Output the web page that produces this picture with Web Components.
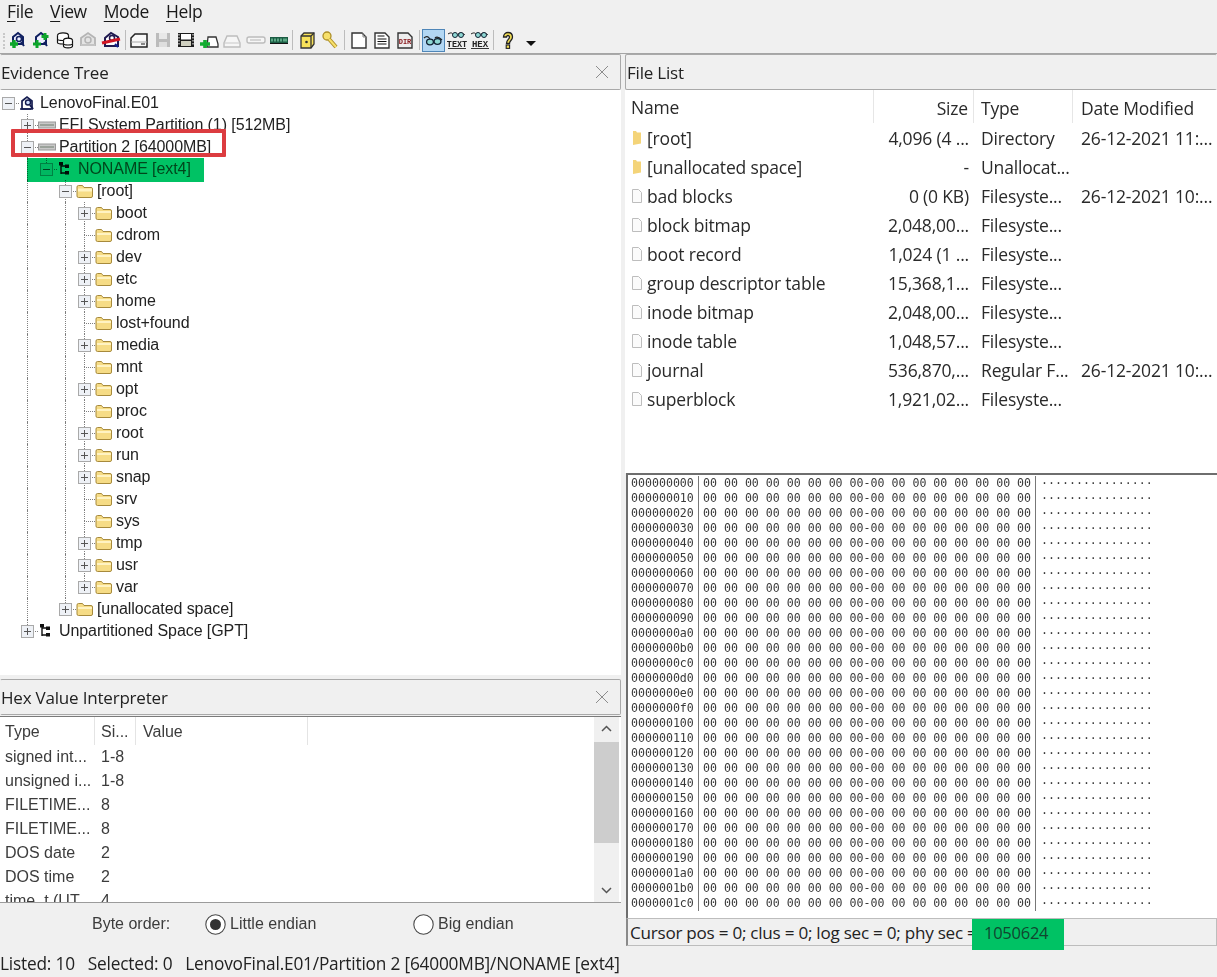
<!DOCTYPE html>
<html>
<head>
<meta charset="utf-8">
<title>Evidence viewer</title>
<style>
    html, body { margin: 0; height: 100%; background: #f0f0f0; overflow: hidden; }
</style>
</head>
<body>
<app-window>
    <menu-bar slot="top"></menu-bar>
    <tool-bar slot="top"></tool-bar>
    <div slot="left">
        <dock-panel title="Evidence Tree" closable style="height:621px">
            <tree-view>
                <tree-node depth="0" guides="" toggle="minus" icon="evidence" first>LenovoFinal.E01</tree-node>
                <tree-node depth="1" guides="0" toggle="plus" icon="disk">EFI System Partition (1) [512MB]</tree-node>
                <tree-node depth="1" guides="0" toggle="minus" icon="disk">Partition 2 [64000MB]</tree-node>
                <tree-node depth="2" guides="01" toggle="minus" icon="volume" last style="color:#175c45">NONAME [ext4]</tree-node>
                <tree-node depth="3" guides="010" toggle="minus" icon="open">[root]</tree-node>
                <tree-node depth="4" guides="0101" toggle="plus" icon="folder">boot</tree-node>
                <tree-node depth="4" guides="0101" icon="folder">cdrom</tree-node>
                <tree-node depth="4" guides="0101" toggle="plus" icon="folder">dev</tree-node>
                <tree-node depth="4" guides="0101" toggle="plus" icon="folder">etc</tree-node>
                <tree-node depth="4" guides="0101" toggle="plus" icon="folder">home</tree-node>
                <tree-node depth="4" guides="0101" icon="folder">lost+found</tree-node>
                <tree-node depth="4" guides="0101" toggle="plus" icon="folder">media</tree-node>
                <tree-node depth="4" guides="0101" icon="folder">mnt</tree-node>
                <tree-node depth="4" guides="0101" toggle="plus" icon="folder">opt</tree-node>
                <tree-node depth="4" guides="0101" icon="folder">proc</tree-node>
                <tree-node depth="4" guides="0101" toggle="plus" icon="folder">root</tree-node>
                <tree-node depth="4" guides="0101" toggle="plus" icon="folder">run</tree-node>
                <tree-node depth="4" guides="0101" toggle="plus" icon="folder">snap</tree-node>
                <tree-node depth="4" guides="0101" icon="folder">srv</tree-node>
                <tree-node depth="4" guides="0101" icon="folder">sys</tree-node>
                <tree-node depth="4" guides="0101" toggle="plus" icon="folder">tmp</tree-node>
                <tree-node depth="4" guides="0101" toggle="plus" icon="folder">usr</tree-node>
                <tree-node depth="4" guides="0101" toggle="plus" last icon="folder">var</tree-node>
                <tree-node depth="3" guides="010" toggle="plus" last icon="folder">[unallocated space]</tree-node>
                <tree-node depth="1" guides="0" toggle="plus" last icon="volume">Unpartitioned Space [GPT]</tree-node>
            </tree-view>
        </dock-panel>
        <dock-panel title="Hex Value Interpreter" closable style="height:266px;margin-top:4px">
            <interp-table></interp-table>
            <byte-order></byte-order>
        </dock-panel>
    </div>
    <div slot="right">
        <dock-panel title="File List" style="height:419px">
            <file-list></file-list>
        </dock-panel>
        <hex-view></hex-view>
    </div>
    <status-bar slot="bottom">Listed: 10&nbsp;&nbsp;&nbsp;Selected: 0&nbsp;&nbsp;&nbsp;LenovoFinal.E01/Partition 2 [64000MB]/NONAME [ext4]</status-bar>
</app-window>

<script>
const UI_FONT = '"Open Sans", "Noto Sans", sans-serif';
const TREE_FONT = '"Liberation Sans", Arial, sans-serif';

const TOOL_ICONS = {
    addA: `<path d="M5 13V7l5-4 5 4v7H5z" fill="#eef" stroke="#102060" stroke-width="2"/><circle cx="11" cy="9" r="2.500" fill="none" stroke="#102060" stroke-width="1.500"/><path d="M13 12l3 4" stroke="#102060" stroke-width="2"/><path d="M6 10v8M2 14h8" stroke="#0da52a" stroke-width="3.400"/>`,
    addB: `<path d="M5 13V7l5-4 5 4v7H5z" fill="#eef" stroke="#102060" stroke-width="2"/><path d="M13 12l3 4" stroke="#102060" stroke-width="2"/><path d="M6 10v8M2 14h8M14 3v7M10.500 6.500h7" stroke="#0da52a" stroke-width="3"/>`,
    stack: `<g fill="#fff" stroke="#111" stroke-width="1.200"><ellipse cx="8" cy="5.500" rx="5.500" ry="2.600"/><path d="M2.500 5.500v7c0 2 11 2 11 0v-7"/><path d="M2.500 9c0 2 11 2 11 0"/><ellipse cx="13" cy="10.500" rx="4.500" ry="2.300"/><path d="M8.500 10.500v5.500c0 2.500 9 2.500 9 0v-5.500"/><path d="M8.500 13.500c0 2 9 2 9 0"/></g>`,
    grayEv: `<path d="M3 15V8l7-5 7 5v7H3z" fill="#e4e4e4" stroke="#b4b4b4" stroke-width="1.800"/><circle cx="10" cy="10" r="3" fill="none" stroke="#b4b4b4" stroke-width="1.500"/><path d="M3 15h14" stroke="#c4c4c4" stroke-width="2"/>`,
    removeEv: `<path d="M4 16V8l6-5 7 4v9H4z" fill="#fff" stroke="#201a50" stroke-width="2"/><circle cx="11" cy="8" r="2.500" fill="none" stroke="#201a50" stroke-width="1.500"/><path d="M1 13L19 9" stroke="#d01522" stroke-width="3"/><path d="M14 14l3 3" stroke="#102090" stroke-width="2"/>`,
    image: `<path d="M6 4h12v13H2V8z" fill="#f8f8f8" stroke="#222" stroke-width="1.500"/><path d="M2 12h16" stroke="#aaa"/><rect x="12" y="13" width="4" height="2" fill="#888"/>`,
    floppyGray: `<path d="M3 3h14v14H3z" fill="#bcbcbc"/><rect x="6" y="3" width="8" height="6" fill="#e8e8e8"/><rect x="6" y="12" width="8" height="5" fill="#dedede"/>`,
    film: `<rect x="2" y="3" width="16" height="14" fill="#1e1e1e"/><rect x="5" y="4" width="10" height="5.500" fill="#fff"/><rect x="5" y="11" width="10" height="5" fill="#d0d0c0"/><path d="M3 4v12M17 4v12" stroke="#fff" stroke-dasharray="1.500 1.500"/>`,
    cardAdd: `<path d="M9 7h8l2 7v3H8z" fill="#fff" stroke="#333" stroke-width="1.300"/><path d="M6 10v8M1 14h10" stroke="#12ac30" stroke-width="3.600"/>`,
    cardGray: `<path d="M5 6h10l3 7v4H2v-4z" fill="#f6f6f6" stroke="#bdbdbd" stroke-width="1.400"/><path d="M2 13h16" stroke="#c8c8c8"/>`,
    chipGray: `<path d="M3 7h14q2 0 2 2v2q0 2-2 2H3q-2 0-2-2V9q0-2 2-2z" fill="#f6f6f6" stroke="#bcbcbc" stroke-width="1.400"/><path d="M4 10h11" stroke="#c8c8c8" stroke-width="1.400"/>`,
    ram: `<rect x="1" y="7" width="18" height="6" fill="#1c5c44"/><path d="M3 8.500v3M6 8.500v3M9 8.500v3M12 8.500v3M15 8.500v3M17 8.500v3" stroke="#76c8a0" stroke-width="1.400"/><path d="M1 13.500h18" stroke="#111"/>`,
    box: `<path d="M4 6l3-3h10v11l-3 4H4z" fill="#f8e25a" stroke="#333" stroke-width="1.300"/><path d="M4 6h10v12M14 6l3-3" fill="none" stroke="#333" stroke-width="1.300"/><circle cx="9.500" cy="12" r="1.300" fill="#333"/>`,
    key: `<circle cx="7" cy="6" r="4" fill="#f7e06b" stroke="#ad8f28" stroke-width="1.300"/><path d="M9 9l7 8" stroke="#ad8f28" stroke-width="4"/><path d="M9 9l7 8" stroke="#f7e06b" stroke-width="2"/>`,
    page: `<path d="M3 3h10l4 4v11H3z" fill="#fff" stroke="#333" stroke-width="1.400"/><path d="M14 3v4h3" fill="none" stroke="#888"/>`,
    doc: `<path d="M3 3h10l4 4v11H3z" fill="#fff" stroke="#333" stroke-width="1.400"/><path d="M5.500 6h7M5.500 9h9M5.500 11.500h9M5.500 14h9" stroke="#111" stroke-width="1.200"/>`,
    dir: `<path d="M3 3h10l4 4v11H3z" fill="#eee" stroke="#333" stroke-width="1.400"/><text x="10" y="13.500" font-family="Liberation Mono, monospace" font-size="7" font-weight="700" text-anchor="middle" fill="#8a1c20">DIR</text>`,
    glasses: `<path d="M1 8c2-2 4-2 6 1M12 8c2-2 4-1 7 2" fill="none" stroke="#222" stroke-width="1.200"/><ellipse cx="7" cy="12" rx="3.400" ry="2.800" fill="#8fd8d4" stroke="#123" stroke-width="1.300"/><ellipse cx="14.500" cy="11.500" rx="3.400" ry="2.800" fill="#8fd8d4" stroke="#123" stroke-width="1.300"/>`,
    text: `<path d="M1 4c3-2 5-1 5 1M11 4c2-2 5-1 7 1" fill="none" stroke="#222"/><circle cx="8" cy="5" r="2.500" fill="#8fd8d4" stroke="#123"/><circle cx="14" cy="5" r="2.500" fill="#8fd8d4" stroke="#123"/><text x="10" y="16.500" font-family="Liberation Mono, monospace" font-size="8.500" font-weight="700" text-anchor="middle" fill="#222">TEXT</text><path d="M1 18.500h18" stroke="#333"/>`,
    hex: `<path d="M1 4c3-2 5-1 5 1M11 4c2-2 5-1 7 1" fill="none" stroke="#222"/><circle cx="8" cy="5" r="2.500" fill="#8fd8d4" stroke="#123"/><circle cx="14" cy="5" r="2.500" fill="#8fd8d4" stroke="#123"/><text x="10" y="16.500" font-family="Liberation Mono, monospace" font-size="9" font-weight="700" text-anchor="middle" fill="#222">HEX</text><path d="M1 18.500h18" stroke="#333"/>`,
    help: `<path d="M5.500 7c0-6 9-6 9 0 0 3.500-3 3.500-3 6.500h-3c0-4 3-4 3-6.500 0-2-3-2-3 0z" fill="#f1dd55" stroke="#222" stroke-width="1.300"/><rect x="8.200" y="15" width="3.400" height="3.400" fill="#f1dd55" stroke="#222" stroke-width="1.100"/>`,
    more: `<path d="M5 11h10l-5 5z" fill="#111"/>`
};

const TREE_ICONS = {
    evidence: `<path d="M3 14V6l5-4 5 4v8z" fill="#fff" stroke="#141c50" stroke-width="1.700"/><circle cx="9" cy="7.500" r="2.500" fill="#d0e0ff" stroke="#141c50" stroke-width="1.400"/><path d="M11 10l3 4" stroke="#141c50" stroke-width="2"/><path d="M1 14h11" stroke="#141c50" stroke-width="1.500"/>`,
    disk: `<rect x="0.500" y="5" width="17" height="6" fill="#c8c8c8" stroke="#9a9a9a"/><path d="M3 7v2M5 7v2M7 7v2M9 7v2M11 7v2M13 7v2M15 7v2" stroke="#6e7c6e"/>`,
    volume: `<path d="M4 3v10M4 5h5M4 12h5" stroke="#111" stroke-width="1.400" fill="none"/><rect x="2" y="1" width="4" height="3.500" fill="#111"/><rect x="8" y="3.500" width="4" height="3.500" fill="#111"/><rect x="8" y="10" width="4" height="3.500" fill="#111"/>`,
    folder: `<path d="M1 4q0-1.500 1.500-1.500h4L8 4.500h7q1.500 0 1.500 1.500v7q0 1.500-1.500 1.500H2.500Q1 14.500 1 13z" fill="#f6dc86" stroke="#a78a3c"/><path d="M2 7h14" stroke="#fff3c2" stroke-width="2"/>`,
    open: `<path d="M1 4q0-1.500 1.500-1.500h4L8 4.500h7q1.500 0 1.500 1.500v7q0 1.500-1.500 1.500H2.500Q1 14.500 1 13z" fill="#f6dc86" stroke="#a78a3c"/><path d="M2 7h14" stroke="#fff3c2" stroke-width="3"/>`
};

class MenuBar extends HTMLElement {
    connectedCallback() {
        this.attachShadow({ mode: 'open' }).innerHTML = `
            <style>
                :host { display: flex; height: 28px; padding-left: 7px; gap: 17px; align-items: flex-start;
                    font: 17.500px/23px ${UI_FONT}; color: #1a1a1a; }
                u { text-underline-offset: 3px; text-decoration-thickness: 1px; }
                span { letter-spacing: -0.400px; }
            </style>
            <span><u>F</u>ile</span><span><u>V</u>iew</span><span><u>M</u>ode</span><span><u>H</u>elp</span>`;
    }
}

class ToolBar extends HTMLElement {
    connectedCallback() {
        const items = ['addA', 'addB', 'stack', 'grayEv', 'removeEv', '|', 'image', 'floppyGray', 'film', 'cardAdd', 'cardGray', 'chipGray', 'ram', '|', 'box', 'key', '|', 'page', 'doc', 'dir', '|', 'glasses*', 'text', 'hex', '|', 'help', 'more'];
        const html = items.map(n => {
            if (n === '|') return '<i class="sep"></i>';
            const on = n.endsWith('*');
            const name = on ? n.slice(0, -1) : n;
            return `<b class="${on ? 'on' : ''}"><svg width="20" height="20" viewBox="0 0 20 20">${TOOL_ICONS[name]}</svg></b>`;
        }).join('');
        this.attachShadow({ mode: 'open' }).innerHTML = `
            <style>
                :host { display: flex; height: 26px; box-sizing: border-box; padding: 1px 0 2px 6.400px; align-items: center;
                    border-bottom: 1px solid #a5a5a5; }
                b { width: 23.250px; height: 23px; display: flex; align-items: center; justify-content: center; box-sizing: border-box; }
                b.on { background: #b3d7f3; border: 1px solid #4f86b8; }
                .sep { width: 1px; height: 20px; background: #bcbcbc; margin: 0 2px; }
                .grip { position: absolute; left: 3px; top: 33px; height: 16px; border-left: 2px dotted #c8c8c8; }
            </style>
            <span class="grip"></span>${html}`;
    }
}

class DockPanel extends HTMLElement {
    connectedCallback() {
        const close = this.hasAttribute('closable') ? `
            <svg width="14" height="14" viewBox="0 0 14 14"><path d="M1 1l12 12M13 1L1 13" stroke="#8c8c8c" stroke-width="1"/></svg>` : '';
        this.attachShadow({ mode: 'open' }).innerHTML = `
            <style>
                :host { display: flex; flex-direction: column; }
                .head { flex: none; height: 36px; box-sizing: border-box; display: flex; align-items: center; justify-content: space-between;
                    border: 1px solid #a9a9a9; border-radius: 2px; border-left-color: var(--head-left, #a9a9a9); border-right-color: var(--head-right, #a9a9a9);
                    padding: 0 11px 0 var(--head-pad, 0); font: 17px ${UI_FONT}; letter-spacing: -0.200px; color: #222; background: #f0f0f0; }
                .body { flex: 1; min-height: 0; display: flex; flex-direction: column; }
            </style>
            <div class="head"><span>${this.getAttribute('title')}</span>${close}</div>
            <div class="body"><slot></slot></div>`;
    }
}

class TreeView extends HTMLElement {
    connectedCallback() {
        this.attachShadow({ mode: 'open' }).innerHTML = `
            <style>
                :host { display: block; flex: 1; position: relative; background: #fff; padding-top: 2px; overflow: hidden; }
                .red { position: absolute; left: 11px; top: 39px; width: 215px; height: 28px; box-sizing: border-box;
                    border: 4px solid #dc3c40; border-radius: 1px; }
                .green { position: absolute; left: 27px; top: 68px; width: 177px; height: 24px; background: #00c264; mix-blend-mode: multiply; }
            </style>
            <slot></slot>
            <div class="red"></div>
            <div class="green"></div>`;
    }
}

class TreeNode extends HTMLElement {
    connectedCallback() {
        const depth = +this.getAttribute('depth');
        const guides = this.getAttribute('guides') || '';
        const toggle = this.getAttribute('toggle');
        const isRoot = this.hasAttribute('first');
        const last = this.hasAttribute('last');
        let cells = '';
        for (let i = 0; i < depth; i++) {
            cells += `<span class="cell ${guides[i] === '1' ? 'v' : ''}"></span>`;
        }
        const sign = toggle ? `<span class="tog"><svg width="13" height="13" viewBox="0 0 13 13"><rect x="0.500" y="0.500" width="12" height="12" fill="#eef1f6" stroke="#a9a9a9"/><path d="M3 6.500h7${toggle === 'plus' ? 'M6.500 3v7' : ''}" stroke="#555"/></svg></span>` : '';
        const lines = isRoot ? '' : `<span class="up"></span>${last ? '' : '<span class="down"></span>'}`;
        this.attachShadow({ mode: 'open' }).innerHTML = `
            <style>
                :host { display: flex; height: 22px; align-items: center; font: 16px/22px ${TREE_FONT}; letter-spacing: -0.080px; color: #222; white-space: nowrap; }
                .cell { flex: none; width: 19px; height: 22px; position: relative; }
                .cell.v::before, .up, .down { content: ''; position: absolute; left: 8px; border-left: 1px dotted #808080; }
                .cell.v::before { top: 0; bottom: 0; }
                .up { top: 0; height: 11px; }
                .down { top: 11px; height: 11px; }
                .hz { position: absolute; left: 8px; right: 0; top: 11px; border-top: 1px dotted #808080; }
                .tog { position: absolute; left: 2px; top: 5px; width: 13px; height: 13px; }
                svg { display: block; }
                .ic { flex: none; width: 21px; height: 17px; display: flex; align-items: center; }
            </style>
            ${cells}
            <span class="cell"><i class="hz"></i>${lines}${sign}</span>
            <span class="ic"><svg width="18" height="17" viewBox="0 0 18 17">${TREE_ICONS[this.getAttribute('icon')]}</svg></span>
            <span><slot></slot></span>`;
    }
}

class FileList extends HTMLElement {
    connectedCallback() {
        const rows = [
            ['folder', '[root]', '4,096 (4 ...', 'Directory', '26-12-2021 11:...'],
            ['folder', '[unallocated space]', '-', 'Unallocat...', ''],
            ['file', 'bad blocks', '0 (0 KB)', 'Filesyste...', '26-12-2021 10:...'],
            ['file', 'block bitmap', '2,048,00...', 'Filesyste...', ''],
            ['file', 'boot record', '1,024 (1 ...', 'Filesyste...', ''],
            ['file', 'group descriptor table', '15,368,1...', 'Filesyste...', ''],
            ['file', 'inode bitmap', '2,048,00...', 'Filesyste...', ''],
            ['file', 'inode table', '1,048,57...', 'Filesyste...', ''],
            ['file', 'journal', '536,870,...', 'Regular F...', '26-12-2021 10:...'],
            ['file', 'superblock', '1,921,02...', 'Filesyste...', '']
        ];
        const icon = k => k === 'folder'
            ? '<svg width="10" height="16" viewBox="0 0 10 16"><path d="M1 1h3l1 1.500h4v11L1 15z" fill="#f4d479"/></svg>'
            : '<svg width="10" height="14" viewBox="0 0 10 14"><path d="M.5.500h6l3 3v10h-9z" fill="#fbfbfb" stroke="#bdbdbd"/></svg>';
        const body = rows.map(r => `
            <div class="row"><div class="c n">${icon(r[0])}<span>${r[1]}</span></div><div class="c s">${r[2]}</div><div class="c t">${r[3]}</div><div class="c d">${r[4]}</div></div>`).join('');
        this.attachShadow({ mode: 'open' }).innerHTML = `
            <style>
                :host { display: block; flex: 1; background: #fff; font: 17.500px ${UI_FONT}; letter-spacing: -0.170px; color: #2a2a2a; overflow: hidden; }
                .row { display: grid; grid-template-columns: 249px 100px 99px 1fr; height: 29px; align-items: center; white-space: nowrap; }
                .hdr { height: 33px; }
                .hdr .c { height: 33px; line-height: 36px; border-right: 1px solid #e6e6e6; box-sizing: border-box; }
                .hdr .c:last-child { border-right: 0; }
                .c { overflow: hidden; padding-left: 7px; }
                .n { display: flex; align-items: center; gap: 5px; padding-left: 7px; }
                .hdr .n { padding-left: 6px; }
                .s { text-align: right; padding: 0 5px 0 0; }
                .d { padding-left: 8px; }
                svg { flex: none; }
            </style>
            <div class="row hdr"><div class="c n">Name</div><div class="c s">Size</div><div class="c t">Type</div><div class="c d">Date Modified</div></div>
            ${body}`;
    }
}

class HexView extends HTMLElement {
    connectedCallback() {
        const bytes = '00 00 00 00 00 00 00 00-00 00 00 00 00 00 00 00';
        const dots = '················';
        const col1 = [], col2 = [], col3 = [];
        for (let i = 0; i < 29; i++) {
            col1.push(i.toString(16).padStart(8, '0') + '0');
            col2.push(bytes);
            col3.push(dots);
        }
        this.attachShadow({ mode: 'open' }).innerHTML = `
            <style>
                :host { display: flex; flex-direction: column; height: 474px; position: relative; margin-left: 1px; }
                .dump { height: 445px; flex: none; box-sizing: border-box; background: #fff; border-top: 2px solid #6e6e6e; border-left: 2px solid #6e6e6e;
                    display: flex; font: 11.600px/15px "DejaVu Sans Mono", "Liberation Mono", monospace; color: #3a3a3a; white-space: pre; padding-top: 1px; overflow: hidden; }
                .col { height: 435px; }
                .a { width: 71px; padding-left: 3px; box-sizing: border-box; border-right: 1px solid #777; }
                .b { width: 337px; padding-left: 4px; box-sizing: border-box; border-right: 1px solid #777; }
                .c { padding-left: 5px; }
                .cursor { flex: none; height: 28px; box-sizing: border-box; border: 1px solid #bdbdbd; border-left: 2px solid #8a8a8a; padding: 1px 0 0 2px;
                    font: 17.100px/26px ${UI_FONT}; letter-spacing: -0.250px; color: #222; white-space: nowrap; background: #f0f0f0; }
                .mark { position: absolute; left: 346px; top: 446px; width: 92px; height: 31px; box-sizing: border-box; padding-left: 12px;
                    background: #00c264; font: 16.500px/28px ${UI_FONT}; letter-spacing: -0.250px; color: #11462f; }
            </style>
            <div class="dump">
                <div class="col a">${col1.join('\n')}</div>
                <div class="col b">${col2.join('\n')}</div>
                <div class="col c">${col3.join('\n')}</div>
            </div>
            <div class="cursor">Cursor pos = 0; clus = 0; log sec = 0; phy sec =</div>
            <div class="mark">1050624</div>`;
    }
}

class InterpTable extends HTMLElement {
    connectedCallback() {
        const rows = [
            ['signed int...', '1-8'], ['unsigned i...', '1-8'], ['FILETIME...', '8'], ['FILETIME...', '8'],
            ['DOS date', '2'], ['DOS time', '2'], ['time_t (UT...', '4']
        ];
        this.attachShadow({ mode: 'open' }).innerHTML = `
            <style>
                :host { display: block; height: 187px; flex: none; position: relative; overflow: hidden; background: #fff;
                    margin-top: 1px; border-bottom: 1px solid #9b9b9b; border-top: 1px solid #7a7a7a; box-sizing: border-box;
                    font: 16px/24px ${TREE_FONT}; color: #3c3c3c; }
                .row { display: grid; grid-template-columns: 95px 41px 172px; height: 24px; white-space: nowrap; }
                .row div { padding-left: 5px; overflow: hidden; }
                .row div:nth-child(2) { padding-left: 6px; }
                .hdr { height: 28px; line-height: 30px; }
                .hdr div { border-right: 1px solid #e4e4e4; box-sizing: border-box; }
                .hdr div:nth-child(3) { padding-left: 7px; }
                .sb { position: absolute; right: 2px; top: 0; bottom: 0; width: 25px; background: #f0f0f0; }
                .thumb { position: absolute; left: 0; right: 0; top: 25px; height: 101px; background: #cdcdcd; }
                svg { position: absolute; left: 7px; }
            </style>
            <div class="row hdr"><div>Type</div><div>Si...</div><div>Value</div></div>
            ${rows.map(r => `<div class="row"><div>${r[0]}</div><div>${r[1]}</div></div>`).join('')}
            <div class="sb">
                <svg style="top:8px" width="11" height="7" viewBox="0 0 11 7"><path d="M1 6l4.500-4.500L10 6" fill="none" stroke="#555" stroke-width="1.500"/></svg>
                <div class="thumb"></div>
                <svg style="bottom:8px" width="11" height="7" viewBox="0 0 11 7"><path d="M1 1l4.500 4.500L10 1" fill="none" stroke="#555" stroke-width="1.500"/></svg>
            </div>`;
    }
}

class ByteOrder extends HTMLElement {
    connectedCallback() {
        const radio = on => `<svg width="21" height="21" viewBox="0 0 21 21"><circle cx="10.500" cy="10.500" r="9.700" fill="#fff" stroke="#4a4a4a" stroke-width="1.100"/>${on ? '<circle cx="10.500" cy="10.500" r="5.500" fill="#333"/>' : ''}</svg>`;
        this.attachShadow({ mode: 'open' }).innerHTML = `
            <style>
                :host { display: flex; flex: 1; align-items: center; font: 16px ${TREE_FONT}; color: #3c3c3c; padding-left: 92px; }
                .opt { display: flex; align-items: center; gap: 4px; }
                .l { width: 113px; }
                .o1 { width: 208px; }
            </style>
            <span class="l">Byte order:</span>
            <span class="opt o1">${radio(true)}<span>Little endian</span></span>
            <span class="opt">${radio(false)}<span>Big endian</span></span>`;
    }
}

class StatusBar extends HTMLElement {
    connectedCallback() {
        this.attachShadow({ mode: 'open' }).innerHTML = `
            <style>
                :host { display: flex; align-items: center; height: 32px; box-sizing: border-box; padding-top: 5px;
                    font: 17.300px ${UI_FONT}; letter-spacing: -0.200px; color: #222; white-space: nowrap; }
            </style>
            <slot></slot>`;
    }
}

class AppWindow extends HTMLElement {
    connectedCallback() {
        this.attachShadow({ mode: 'open' }).innerHTML = `
            <style>
                :host { display: flex; flex-direction: column; width: 1217px; height: 977px; background: #f0f0f0; overflow: hidden; }
                .split { display: grid; grid-template-columns: 622px 595px; height: 891px; }
                .side { min-width: 0; }
                .left { --head-left: transparent; margin-right: 1px; }
                .right { padding-left: 3px; --head-pad: 1px; --head-right: transparent; }
                ::slotted(div) { display: block; }
            </style>
            <slot name="top"></slot>
            <div class="split">
                <div class="side left"><slot name="left"></slot></div>
                <div class="side right"><slot name="right"></slot></div>
            </div>
            <slot name="bottom"></slot>`;
    }
}

customElements.define('app-window', AppWindow);
customElements.define('menu-bar', MenuBar);
customElements.define('tool-bar', ToolBar);
customElements.define('dock-panel', DockPanel);
customElements.define('tree-view', TreeView);
customElements.define('tree-node', TreeNode);
customElements.define('file-list', FileList);
customElements.define('hex-view', HexView);
customElements.define('interp-table', InterpTable);
customElements.define('byte-order', ByteOrder);
customElements.define('status-bar', StatusBar);
</script>
</body>
</html>
